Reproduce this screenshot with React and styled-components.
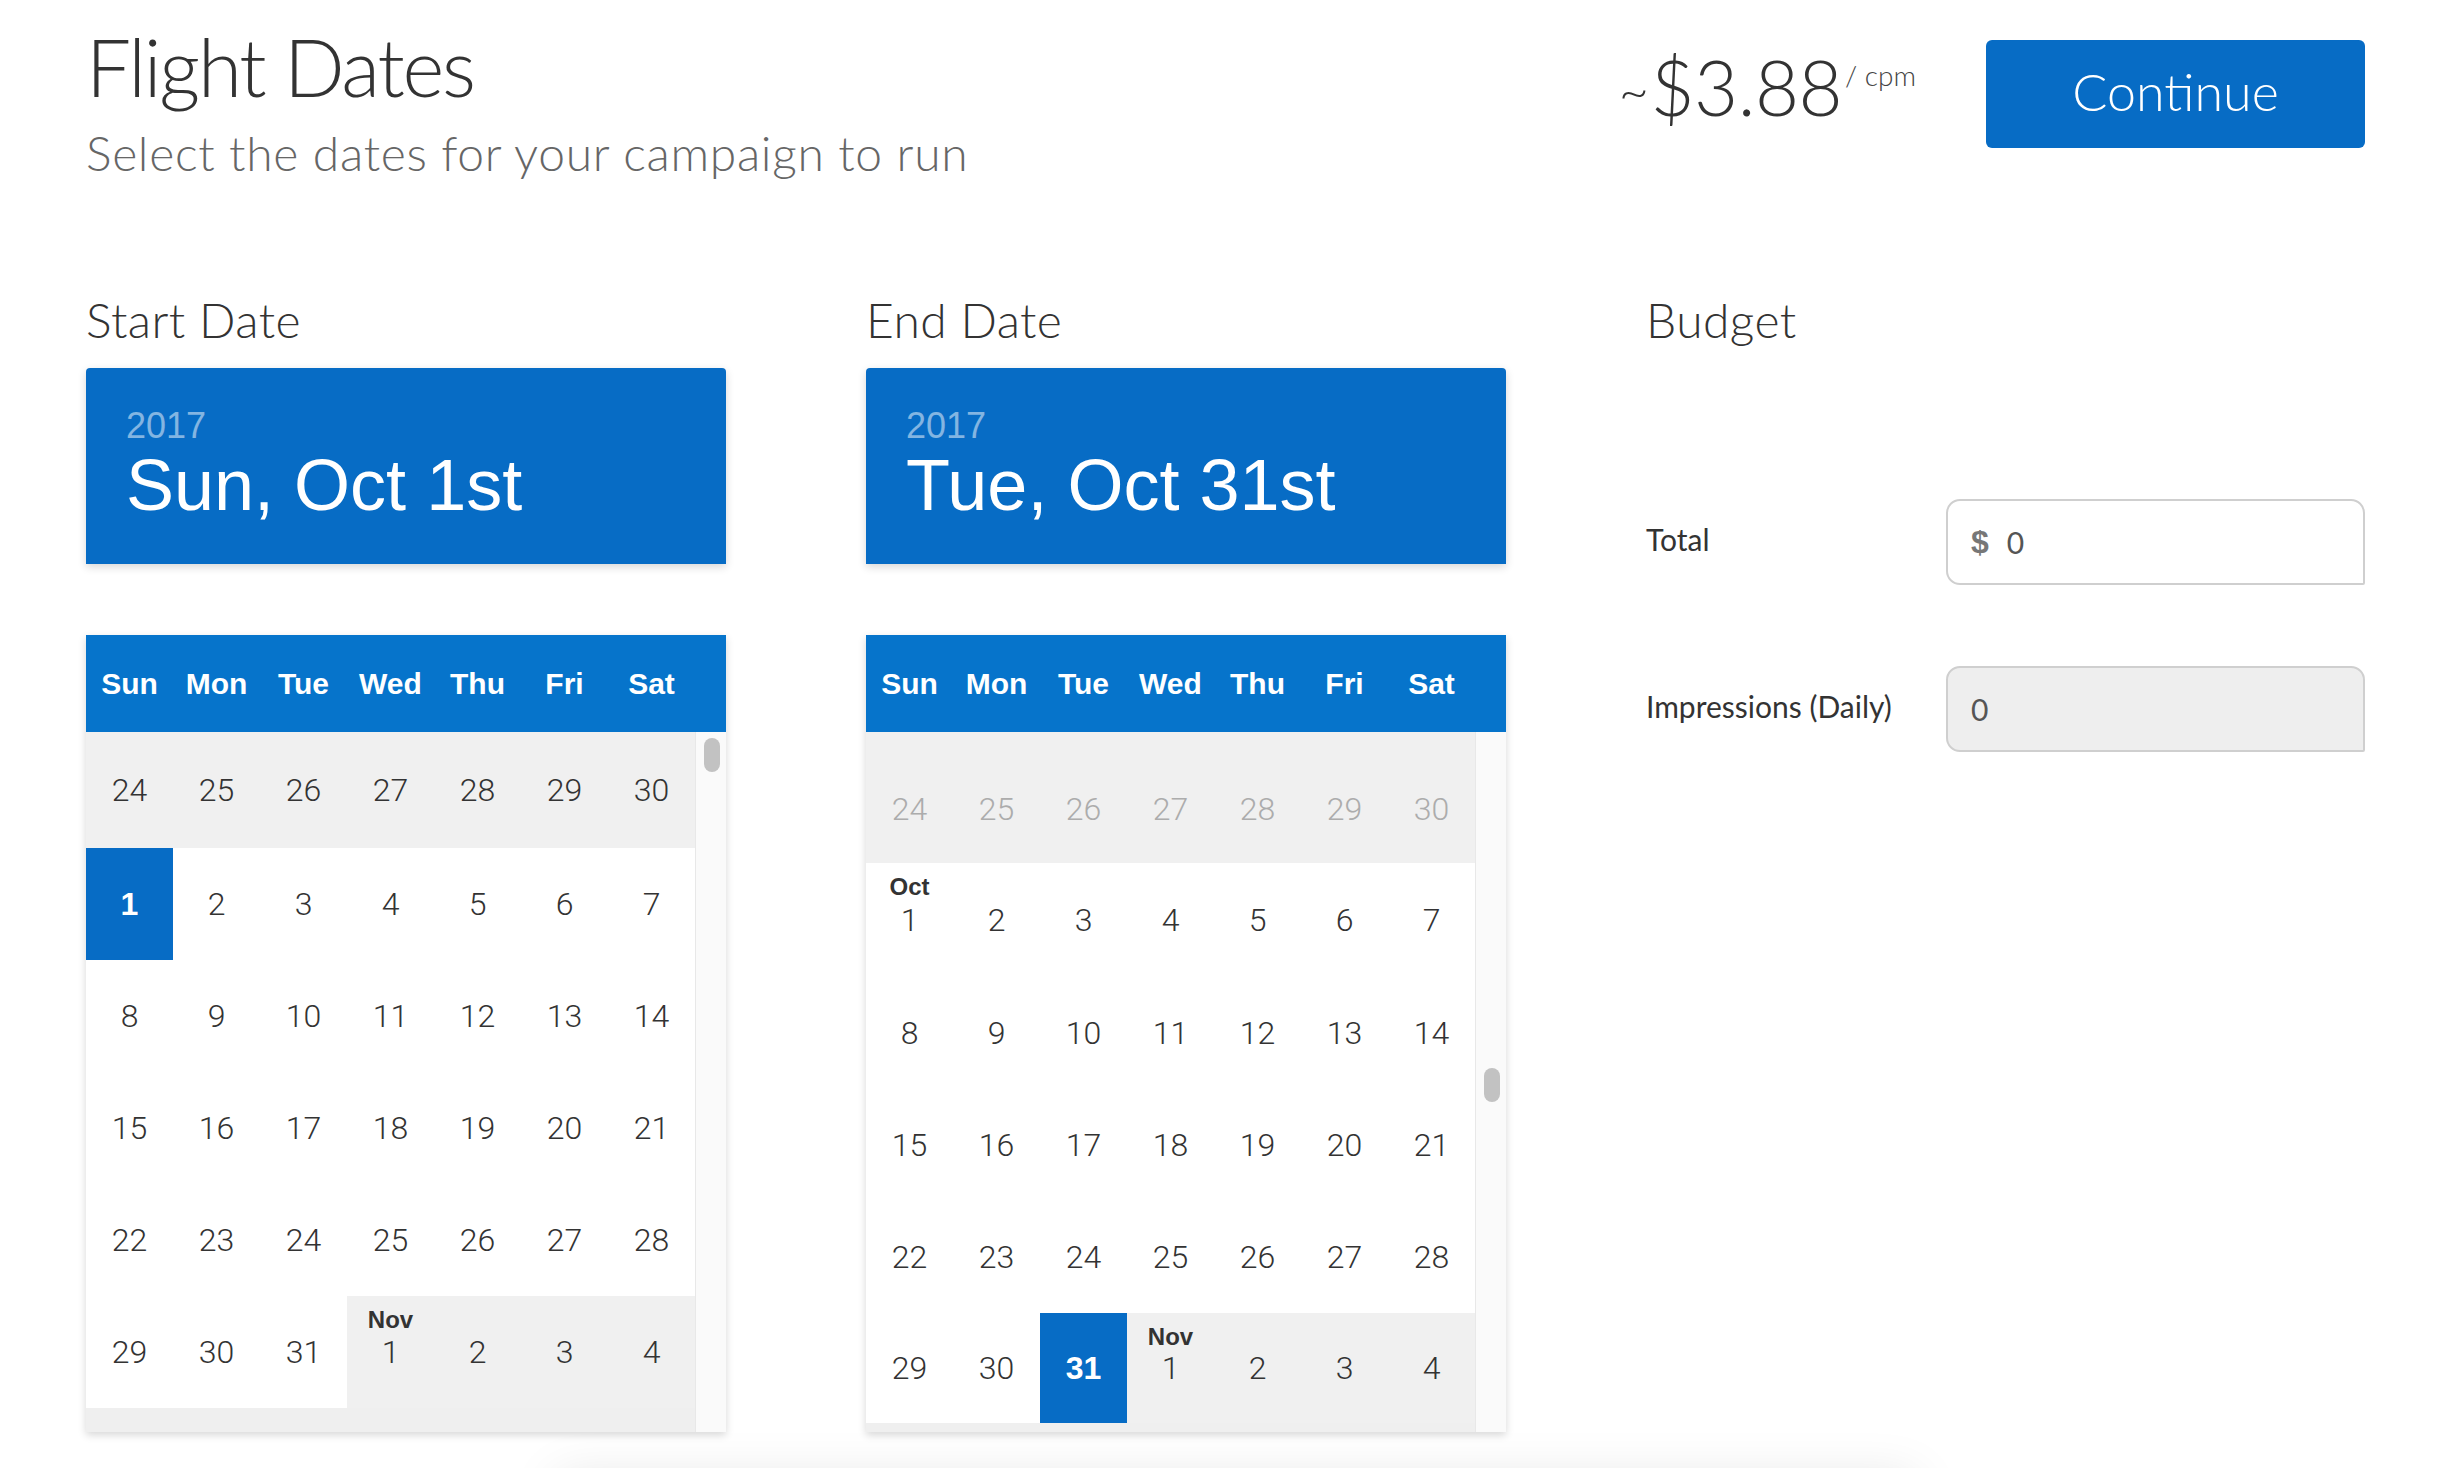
import React from "react";
import styled, { createGlobalStyle } from "styled-components";

const GlobalStyle = createGlobalStyle`
  html, body {
    margin: 0;
    padding: 0;
    background: #fff;
  }
  body {
    font-family: "Lato", "Open Sans", sans-serif;
    color: #333;
    overflow: hidden;
  }
`;

const range = (a, b) => Array.from({ length: b - a + 1 }, (_, i) => a + i);

const startWeeks = [
  { h: 116, days: range(24, 30).map((n) => ({ n, other: true })) },
  { h: 112, days: range(1, 7).map((n) => ({ n, selected: n === 1 })) },
  { h: 112, days: range(8, 14).map((n) => ({ n })) },
  { h: 112, days: range(15, 21).map((n) => ({ n })) },
  { h: 112, days: range(22, 28).map((n) => ({ n })) },
  {
    h: 112,
    days: [
      ...range(29, 31).map((n) => ({ n })),
      ...range(1, 4).map((n) => ({ n, other: true, label: n === 1 ? "Nov" : null })),
    ],
  },
];

const endWeeks = [
  { h: 131, pt: 23, days: range(24, 30).map((n) => ({ n, other: true, faded: true })) },
  { h: 114, days: range(1, 7).map((n) => ({ n, label: n === 1 ? "Oct" : null })) },
  { h: 112, days: range(8, 14).map((n) => ({ n })) },
  { h: 112, days: range(15, 21).map((n) => ({ n })) },
  { h: 112, days: range(22, 28).map((n) => ({ n })) },
  {
    h: 110,
    days: [
      ...range(29, 31).map((n) => ({ n, selected: n === 31 })),
      ...range(1, 4).map((n) => ({ n, other: true, label: n === 1 ? "Nov" : null })),
    ],
  },
];

const weekdays = ["Sun", "Mon", "Tue", "Wed", "Thu", "Fri", "Sat"];

export default function App() {
  return (
    <Page>
      <GlobalStyle />
      <TopBar>
        <TitleBlock>
          <Title>Flight Dates</Title>
          <Subtitle>Select the dates for your campaign to run</Subtitle>
        </TitleBlock>
        <Actions>
          <Price>
            <Tilde>~</Tilde>$3.88<Per>/ cpm</Per>
          </Price>
          <ContinueButton>Continue</ContinueButton>
        </Actions>
      </TopBar>

      <Columns>
        <DateColumn>
          <SectionTitle>Start Date</SectionTitle>
          <DateCard>
            <Year>2017</Year>
            <BigDate>Sun, Oct 1st</BigDate>
          </DateCard>
          <Calendar weeks={startWeeks} thumbTop={6} strip={24} />
        </DateColumn>

        <DateColumn>
          <SectionTitle>End Date</SectionTitle>
          <DateCard>
            <Year>2017</Year>
            <BigDate>Tue, Oct 31st</BigDate>
          </DateCard>
          <Calendar weeks={endWeeks} thumbTop={336} strip={9} />
        </DateColumn>

        <BudgetColumn>
          <SectionTitle>Budget</SectionTitle>
          <Fields>
            <Field>
              <FieldLabel>Total</FieldLabel>
              <InputBox>
                <Currency>$</Currency>
                <Value>0</Value>
              </InputBox>
            </Field>
            <Field>
              <FieldLabel>Impressions (Daily)</FieldLabel>
              <InputBox $disabled>
                <Value>0</Value>
              </InputBox>
            </Field>
          </Fields>
        </BudgetColumn>
      </Columns>

      <FooterShade />
    </Page>
  );
}

function Calendar({ weeks, thumbTop, strip }) {
  return (
    <CalendarBox>
      <WeekBar>
        <WeekGrid>
          {weekdays.map((d) => (
            <WeekDay key={d}>{d}</WeekDay>
          ))}
        </WeekGrid>
        <TrackSpacer />
      </WeekBar>
      <CalendarBody>
        <Weeks>
          {weeks.map((w, i) => (
            <WeekRow key={i} $h={w.h}>
              {w.days.map((d, j) => (
                <DayCell
                  key={j}
                  $other={d.other}
                  $selected={d.selected}
                  $faded={d.faded}
                  $pt={w.pt || 0}
                >
                  {d.label && <MonthLabel>{d.label}</MonthLabel>}
                  {d.n}
                </DayCell>
              ))}
            </WeekRow>
          ))}
          <BottomStrip $h={strip} />
        </Weeks>
        <ScrollTrack>
          <ScrollThumb $top={thumbTop} />
        </ScrollTrack>
      </CalendarBody>
    </CalendarBox>
  );
}

const Page = styled.div`
  width: 2446px;
  height: 1468px;
  box-sizing: border-box;
  padding: 16px 81px 0 86px;
  overflow: hidden;
`;

const TopBar = styled.div`
  display: flex;
  justify-content: space-between;
  align-items: flex-start;
  height: 167px;
`;

const TitleBlock = styled.div`
  display: flex;
  flex-direction: column;
`;

const Title = styled.h1`
  margin: 0;
  font-family: "Lato", sans-serif;
  font-weight: 300;
  font-size: 80px;
  line-height: 100px;
  letter-spacing: -2.2px;
  color: #333;
`;

const Subtitle = styled.div`
  margin-top: 7px;
  font-family: "Lato", sans-serif;
  font-weight: 300;
  font-size: 48px;
  line-height: 60px;
  letter-spacing: 0.7px;
  color: #666;
`;

const Actions = styled.div`
  display: flex;
  align-items: flex-start;
  margin-top: 24px;
  gap: 70px;
`;

const Price = styled.div`
  margin-top: 9px;
  font-family: "Lato", sans-serif;
  font-weight: 300;
  font-size: 76px;
  line-height: 76px;
  letter-spacing: -0.5px;
  color: #333;
  white-space: nowrap;
`;

const Tilde = styled.span`
  font-size: 52px;
  margin-right: 2px;
  vertical-align: 6px;
`;

const Per = styled.span`
  font-size: 28px;
  letter-spacing: 0;
  vertical-align: top;
  position: relative;
  top: -12px;
  margin-left: 3px;
  color: #444;
`;

const ContinueButton = styled.button`
  width: 379px;
  height: 108px;
  padding: 0 0 6px;
  border: none;
  border-radius: 6px;
  background: #076cc5;
  color: #fff;
  font-family: "Lato", sans-serif;
  font-weight: 300;
  font-size: 52px;
  cursor: pointer;
`;

const Columns = styled.div`
  display: flex;
  gap: 140px;
  margin-top: 107px;
`;

const DateColumn = styled.div`
  width: 640px;
  display: flex;
  flex-direction: column;
`;

const BudgetColumn = styled.div`
  width: 719px;
  display: flex;
  flex-direction: column;
`;

const SectionTitle = styled.h2`
  margin: 0 0 18px;
  font-family: "Lato", sans-serif;
  font-weight: 300;
  font-size: 48px;
  line-height: 60px;
  letter-spacing: 0.4px;
  color: #333;
`;

const DateCard = styled.div`
  height: 196px;
  box-sizing: border-box;
  padding: 40px 40px 0;
  background: #076cc5;
  border-radius: 4px 4px 0 0;
  box-shadow: 0 3px 8px rgba(0, 0, 0, 0.16);
  font-family: "Liberation Sans", Arial, sans-serif;
`;

const Year = styled.div`
  font-size: 36px;
  line-height: 36px;
  color: rgba(255, 255, 255, 0.5);
`;

const BigDate = styled.div`
  margin-top: 5px;
  font-size: 72px;
  line-height: 72px;
  color: #fff;
`;

const CalendarBox = styled.div`
  margin-top: 71px;
  box-shadow: 0 3px 8px rgba(0, 0, 0, 0.16);
  font-family: "Liberation Sans", Arial, sans-serif;
`;

const WeekBar = styled.div`
  display: flex;
  height: 97px;
  background: #0674cb;
`;

const WeekGrid = styled.div`
  width: 609px;
  display: grid;
  grid-template-columns: repeat(7, 1fr);
`;

const WeekDay = styled.div`
  text-align: center;
  font-size: 30px;
  font-weight: 700;
  line-height: 97px;
  color: #fff;
`;

const TrackSpacer = styled.div`
  flex: 1;
`;

const CalendarBody = styled.div`
  display: flex;
  height: 700px;
`;

const Weeks = styled.div`
  width: 609px;
  display: flex;
  flex-direction: column;
`;

const WeekRow = styled.div`
  display: grid;
  grid-template-columns: repeat(7, 1fr);
  height: ${(p) => p.$h}px;
`;

const DayCell = styled.div`
  position: relative;
  display: flex;
  align-items: center;
  justify-content: center;
  box-sizing: border-box;
  padding-top: ${(p) => p.$pt}px;
  background: ${(p) => (p.$selected ? "#076cc5" : p.$other ? "#f0f0f0" : "#fff")};
  color: ${(p) => (p.$selected ? "#fff" : p.$faded ? "#acacac" : "#333")};
  font-family: ${(p) =>
    p.$selected ? `"Liberation Sans", Arial, sans-serif` : `"Roboto", "Liberation Sans", sans-serif`};
  font-weight: ${(p) => (p.$selected ? 700 : 300)};
  font-size: 32px;
`;

const MonthLabel = styled.span`
  position: absolute;
  top: 10px;
  left: 0;
  right: 0;
  text-align: center;
  font-family: "Liberation Sans", Arial, sans-serif;
  font-weight: 700;
  font-size: 24px;
  color: #333;
`;

const BottomStrip = styled.div`
  height: ${(p) => p.$h}px;
  background: #efefef;
`;

const ScrollTrack = styled.div`
  flex: 1;
  background: #fafafa;
  border-left: 1px solid #e8e8e8;
`;

const ScrollThumb = styled.div`
  width: 16px;
  height: 34px;
  margin: ${(p) => p.$top}px 0 0 8px;
  border-radius: 8px;
  background: #c2c2c2;
`;

const Fields = styled.div`
  display: flex;
  flex-direction: column;
  gap: 81px;
  padding-top: 131px;
`;

const Field = styled.div`
  display: grid;
  grid-template-columns: 300px 1fr;
  align-items: center;
`;

const FieldLabel = styled.div`
  margin-top: -6px;
  font-family: "Lato", sans-serif;
  font-size: 30px;
  color: #333;
`;

const InputBox = styled.div`
  height: 86px;
  box-sizing: border-box;
  display: flex;
  align-items: center;
  gap: 18px;
  padding: 0 23px;
  border: 2px solid #cfcfcf;
  border-radius: 14px 14px 2px 14px;
  background: ${(p) => (p.$disabled ? "#eeeeee" : "#fff")};
`;

const Currency = styled.span`
  font-family: "Liberation Sans", Arial, sans-serif;
  font-weight: 700;
  font-size: 32px;
  color: #777;
`;

const Value = styled.span`
  font-family: "Lato", sans-serif;
  font-size: 30px;
  color: #555;
`;

const FooterShade = styled.div`
  width: 1360px;
  height: 80px;
  margin: 44px 0 0 470px;
  background: #fff;
  box-shadow: 0 0 50px rgba(0, 0, 0, 0.1);
`;
